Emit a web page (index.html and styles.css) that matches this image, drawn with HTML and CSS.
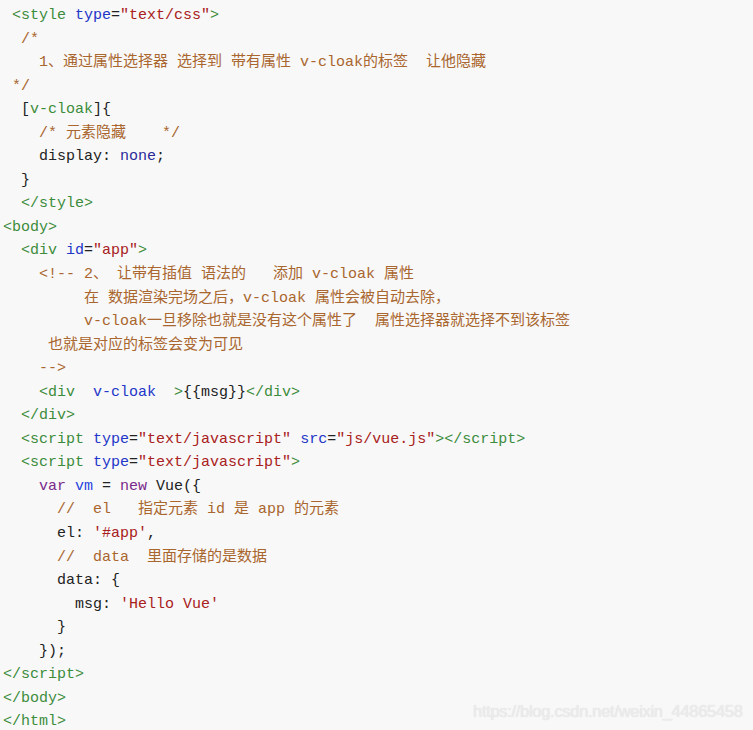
FILE: index.html
```html
<!DOCTYPE html>
<html lang="zh">
<head>
<meta charset="utf-8">
<title>v-cloak</title>
<link rel="stylesheet" href="styles.css">
</head>
<body>
<div class="block">
<pre class="code"> <span class="tg">&lt;style</span> <span class="at">type</span>=<span class="st">"text/css"</span><span class="tg">&gt;</span>
  <span class="cm">/*</span>
<span class="cm">    1、通过属性选择器 选择到 带有属性 v-cloak的标签  让他隐藏</span>
<span class="cm"> */</span>
  [<span class="tg">v-cloak</span>]{
    <span class="cm">/* 元素隐藏    */</span>
    display: <span class="atom">none</span>;
  }
  <span class="tg">&lt;/style&gt;</span>
<span class="tg">&lt;body&gt;</span>
  <span class="tg">&lt;div</span> <span class="at">id</span>=<span class="st">"app"</span><span class="tg">&gt;</span>
    <span class="cm">&lt;!-- 2、 让带有插值 语法的   添加 v-cloak 属性</span>
<span class="cm">         在 数据渲染完场之后，v-cloak 属性会被自动去除，</span>
<span class="cm">         v-cloak一旦移除也就是没有这个属性了  属性选择器就选择不到该标签</span>
<span class="cm">     也就是对应的标签会变为可见</span>
<span class="cm">    --&gt;</span>
    <span class="tg">&lt;div</span>  <span class="at">v-cloak</span>  <span class="tg">&gt;</span>{{msg}}<span class="tg">&lt;/div&gt;</span>
  <span class="tg">&lt;/div&gt;</span>
  <span class="tg">&lt;script</span> <span class="at">type</span>=<span class="st">"text/javascript"</span> <span class="at">src</span>=<span class="st">"js/vue.js"</span><span class="tg">&gt;&lt;/script&gt;</span>
  <span class="tg">&lt;script</span> <span class="at">type</span>=<span class="st">"text/javascript"</span><span class="tg">&gt;</span>
    <span class="kw">var</span> <span class="df">vm</span> = <span class="kw">new</span> Vue({
      <span class="cm">//  el   指定元素 id 是 app 的元素</span>
      el: <span class="st">'#app'</span>,
      <span class="cm">//  data  里面存储的是数据</span>
      data: {
        msg: <span class="st">'Hello Vue'</span>
      }
    });
<span class="tg">&lt;/script&gt;</span>
<span class="tg">&lt;/body&gt;</span>
<span class="tg">&lt;/html&gt;</span></pre>
<span class="watermark">https://blog.csdn.net/weixin_44865458</span>
</div>
</body>
</html>
```
FILE: styles.css
```css
html, body {
  margin: 0;
  padding: 0;
  background: #f8f8f8;
}

.block {
  position: relative;
  width: 753px;
  height: 730px;
  background: #f8f8f8;
  overflow: hidden;
}

.code {
  margin: 0;
  padding: 4px 3px 0 3px;
  font-family: "Liberation Mono", "Noto Sans CJK SC", monospace;
  font-size: 15px;
  line-height: 23.55px;
  color: #222222;
  white-space: pre;
}

.tg { color: #3c8c3c; }
.at { color: #2236c8; }
.st { color: #a82020; }
.cm { color: #a9662e; }
.kw { color: #7a2a8a; }
.df { color: #1f44e0; }
.atom { color: #2a2a9a; }

.watermark {
  position: absolute;
  left: 473px;
  top: 702px;
  font-family: "Liberation Sans", Arial, sans-serif;
  font-size: 16.5px;
  letter-spacing: -0.3px;
  color: #ececec;
  text-shadow: 0 0 1px #d8d8d8;
}
```
